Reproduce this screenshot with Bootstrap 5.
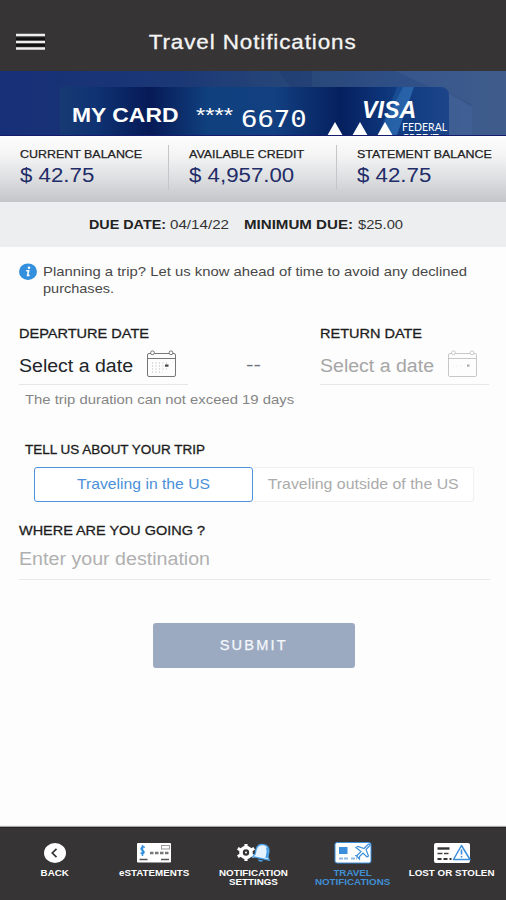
<!DOCTYPE html>
<html lang="en">
<head>
<meta charset="utf-8">
<meta name="viewport" content="width=device-width, initial-scale=1">
<title>Travel Notifications</title>
<link href="https://cdn.jsdelivr.net/npm/bootstrap@5.3.0/dist/css/bootstrap.min.css" rel="stylesheet">
<style>
body{font-family:"Liberation Sans",Arial,sans-serif;color:#333;overflow:hidden;background:#fdfdfd}
.screen{height:900px}
/* extended-width lettering */
.wx{display:inline-block;white-space:nowrap;transform-origin:0 50%;transform:scaleX(var(--k,1.08));flex:none}
.wc{transform-origin:50% 50%}
.top-bar{height:71px;background:#363435;padding:12px 16px 0 16px}
.menu-btn{width:29px}
.top-title{font-size:20px;letter-spacing:.8px;color:#f4f4f4;--k:1.122;-webkit-text-stroke:.3px #f4f4f4}
.title-wrap{padding-right:29px}
.hero{height:65px;background:linear-gradient(90deg,#172f77 0,#1b3876 35%,#284879 60%,#2f4f88 80%,#3b5888 100%);border-bottom:1px solid #141a6c}
.hero-art{inset:0}
.plate{margin:16px 57px 0 60px;height:48px;border-radius:0 8px 0 0;padding-left:12px;color:#fff;background:linear-gradient(90deg,#173a73 0,#0f3373 9%,#061a56 23%,#10407e 38%,#124081 55%,#06205f 72%,#0f3a80 86%,#1c458a 100%)}
.plate-name{width:124px;height:56px;font-size:21px;font-weight:700;--k:1.091}
.plate-stars{width:45px;padding-top:8px;font-size:20px;--k:1.188}
.plate-num{width:86px;height:48px;padding-top:17px;font-family:"DejaVu Sans Mono",monospace;font-size:23.5px;--k:1.16}
.plate-visa{right:9px;top:10px;width:78px}
.visa-word{font-size:23.5px;line-height:27px;height:27px;font-weight:700;font-style:italic;display:block;--k:.99}
.visa-sub{font-family:Lato,sans-serif;font-size:10.5px;line-height:11px;margin:-2px 0 0 40px;--k:1}
.visa-sub .wx{display:block}
.balances{height:66px;background:linear-gradient(#fdfdfe 0,#f4f4f5 30%,#dcdee0 65%,#c3c6c9 100%)}
.bal{padding:10px 0 0 20px;width:168.500px}
.bal + .bal::before{content:"";position:absolute;left:-1px;top:9px;height:45px;border-left:1px solid #c4c6c9}
.bal-label{display:block;font-size:11.5px;line-height:16px;color:#222;--k:1.082;-webkit-text-stroke:.25px #222}
.bal-value{display:block;font-size:20.5px;line-height:26px;color:#222c68;--k:1.086}
.due{height:45px;background:#edeef0;font-size:13px;padding-left:89px;color:#333}
.due b{color:#222}
.form-area{padding:16px 17px 0 19px}
.info-line{font-size:13.5px;line-height:17px;color:#484848;gap:6px}
.field-label{font-size:13.5px;line-height:18px;color:#1c1c1c;-webkit-text-stroke:.3px #1c1c1c}
.date-box{width:169px;border-bottom:1px solid #e6e6e6;height:42px;padding-top:5px}
.date-box svg{margin-top:1px}
.date-text{font-size:18px;line-height:36px;width:127px;--k:1.085}
.hint{font-size:13.5px;line-height:18px;color:#858585;padding:2px 0 0 6px}
.trip-label{font-size:12.5px;--k:1.078;padding-left:6px;margin-top:32px}
.seg{margin:8px 14px 0 15px;height:35px}
.seg .btn{padding:0;font-size:15px;border-radius:3px;height:35px;width:219px;background:#fff}
.seg .seg-on{border:1px solid #4f92dc;color:#4a90d9;z-index:1}
.seg .seg-off{border:1px solid #f0f0f0;border-left:0;color:#ababab;width:221px}
.dest{border:0;border-bottom:1px solid #e8e8e8;height:40px;width:471px}
.dest .wx{font-size:18px;line-height:39px;color:#b0b0b0;--k:1.091}
.submit{width:202px;height:45px;margin:43px auto 0 134px;background:#9caac1;border-radius:3px;border:0;color:#f4f7fb;font-size:14px;letter-spacing:2.1px;padding:0;-webkit-text-stroke:.25px #f4f7fb}
.submit:hover{background:#9caac1;color:#f4f7fb}
.tabs{height:73px;background:#363435;border-top:1px solid #222;box-shadow:0 -1px 1px #aaa;color:#fff;padding:0 3px 0 5px}
.tab-item{width:99.3px;padding-top:13px;font-size:9.5px;line-height:8.5px;font-weight:700;--k:1.03}
.tab-item svg{height:24px;margin-bottom:4px}
.tab-on{color:#408fd4}
</style>
<script src="https://cdn.jsdelivr.net/npm/bootstrap@5.3.0/dist/js/bootstrap.bundle.min.js"></script>
</head>
<body>
<div class="screen d-flex flex-column">
  <header class="top-bar d-flex align-items-center">
    <svg class="menu-btn" height="18" viewBox="0 0 28 18" preserveAspectRatio="none"><path d="M0 6h28M0 12h28" stroke="#111" stroke-width="3"/><path d="M0 2h28M0 9h28M0 15.500h28" stroke="#eee" stroke-width="2.300"/></svg>
    <div class="flex-grow-1 text-center title-wrap"><span class="wx wc top-title">Travel Notifications</span></div>
  </header>

  <section class="hero position-relative overflow-hidden flex-shrink-0">
    <svg class="hero-art position-absolute" width="506" height="65"><path d="M278 0H312V16H290z" fill="#1e3a70" opacity=".5"/><path d="M395 0 430 16 450 22 472 34V65H506V0z" fill="#476496" opacity=".35"/><path d="M449 22 472 36V65H449z" fill="#4a6a9f" opacity=".5"/></svg>
    <div class="plate d-flex position-relative">
      <svg class="hero-art position-absolute" width="389" height="48"><path d="M343 0H354L337 48H318z" fill="#3476bd" opacity=".65"/><path d="M337 0H343L326 48H318z" fill="#2160a6" opacity=".5"/><path d="M267 49 275 35 283 49zM292 49 300 35 308 49zM317 49 325 35 333 49z" fill="#fff"/></svg>
      <div class="plate-name d-flex align-items-center"><span class="wx">MY CARD</span></div>
      <div class="plate-stars d-flex align-items-center"><span class="wx">****</span></div>
      <div class="plate-num d-flex align-items-center"><span class="wx">6670</span></div>
      <div class="plate-visa position-absolute">
        <span class="wx visa-word">VISA</span>
        <div class="visa-sub"><span class="wx">FEDERAL</span><span class="wx">CREDIT</span></div>
      </div>
    </div>
  </section>

  <section class="balances d-flex flex-shrink-0">
    <div class="bal position-relative"><div class="wx bal-label">CURRENT BALANCE</div><div class="wx bal-value">$ 42.75</div></div>
    <div class="bal position-relative"><div class="wx bal-label">AVAILABLE CREDIT</div><div class="wx bal-value">$ 4,957.00</div></div>
    <div class="bal position-relative"><div class="wx bal-label">STATEMENT BALANCE</div><div class="wx bal-value">$ 42.75</div></div>
  </section>

  <section class="due d-flex align-items-center flex-shrink-0">
    <div style="width:81px"><b class="wx" style="--k:1.103">DUE DATE:</b></div>
    <div style="width:74px"><span class="wx" style="--k:1.166">04/14/22</span></div>
    <div style="width:114px"><b class="wx" style="--k:1.161">MINIMUM DUE:</b></div>
    <span class="wx" style="--k:1.132">$25.00</span>
  </section>

  <main class="form-area flex-grow-1">
    <div class="info-line d-flex">
      <svg width="18" height="18" viewBox="0 0 18 18"><ellipse cx="9" cy="8.700" rx="9" ry="8.300" fill="#3490dc"/><circle cx="10" cy="4.800" r="1.300" fill="#fff"/><path d="M7.200 7.700H9.600L8.600 12.500H10.600" stroke="#fff" stroke-width="1.600" fill="none"/></svg>
      <div><span class="wx" style="--k:1.099">Planning a trip? Let us know ahead of time to avoid any declined</span><br><span class="wx" style="--k:1.075">purchases.</span></div>
    </div>

    <div class="d-flex justify-content-between">
      <div class="pt-4 mt-1">
        <div class="field-label"><span class="wx" style="--k:1.076">DEPARTURE DATE</span></div>
        <div class="date-box d-flex text-dark">
          <div class="date-text"><span class="wx">Select a date</span></div>
          <svg width="32" height="30" viewBox="0 0 32 30"><g fill="none" stroke="#777"><rect x="1.500" y="4.500" width="28" height="23" rx="1.500"/><path d="M1.500 9.500H29.500"/><g fill="#fff"><circle cx="6.500" cy="3.800" r="1.900"/><circle cx="25" cy="3.800" r="1.900"/></g><path d="M6 14H23M6 17H19M6 20H23M6 23H17" stroke="#bbb" stroke-dasharray="1 2.500"/></g><path d="M19 15.500h3.500v2.200H19z" fill="#444"/></svg>
        </div>
      </div>
      <div class="pt-4 mt-1">
        <div class="field-label">&nbsp;</div>
        <div class="date-text text-secondary w-auto pt-1 pe-1"><span class="wx" style="--k:1.25">--</span></div>
      </div>
      <div class="pt-4 mt-1">
        <div class="field-label"><span class="wx" style="--k:1.074">RETURN DATE</span></div>
        <div class="date-box d-flex" style="color:#a6a6a6">
          <div class="date-text"><span class="wx">Select a date</span></div>
          <svg width="32" height="30" viewBox="0 0 32 30"><g fill="none" stroke="#c8c8c8"><rect x="1.500" y="4.500" width="28" height="23" rx="1.500"/><path d="M1.500 9.500H29.500"/><g fill="#fff"><circle cx="6.500" cy="3.800" r="1.900"/><circle cx="25" cy="3.800" r="1.900"/></g><path d="M6 17H16" stroke="#e6e6e6" stroke-dasharray="1 2.500"/></g><path d="M20 15.500h2.500v2.200H20z" fill="#aaa"/></svg>
        </div>
      </div>
    </div>
    <div class="hint mt-1"><span class="wx" style="--k:1.1">The trip duration can not exceed 19 days</span></div>

    <div class="field-label trip-label"><span class="wx">TELL US ABOUT YOUR TRIP</span></div>
    <div class="seg d-flex">
      <button class="btn seg-on position-relative"><span class="wx wc" style="--k:1.047">Traveling in the US</span></button>
      <button class="btn seg-off"><span class="wx wc" style="--k:1.059">Traveling outside of the US</span></button>
    </div>

    <div class="field-label mt-3 pt-1"><span class="wx" style="--k:1.07">WHERE ARE YOU GOING ?</span></div>
    <div class="dest"><span class="wx">Enter your destination</span></div>

    <button class="btn submit d-block"><span class="wx wc" style="--k:1.04">SUBMIT</span></button>
  </main>

  <nav class="tabs d-flex flex-shrink-0 text-center">
    <div class="tab-item"><svg width="24" viewBox="0 0 24 24"><ellipse cx="12" cy="12" rx="11" ry="10" fill="#fff"/><path d="M13.500 7.800 9.300 12 13.500 16.200" fill="none" stroke="#333" stroke-width="1.700"/></svg><br><span class="wx wc">BACK</span></div>
    <div class="tab-item"><svg width="36" viewBox="0 0 36 24"><rect x="1" y="2" width="34" height="19.500" rx="1" fill="#fff"/><path d="M8.800 6.500C6 4.500 3.700 8 6.200 9.200 9 10.500 8.500 13.500 4.500 12M6.500 4v11" fill="none" stroke="#3490dc" stroke-width="1.500"/><path d="M14 12h20" stroke="#777" stroke-width="2.500" stroke-dasharray="3.500 1.500"/><rect x="25.500" y="4.500" width="8" height="3.500" fill="none" stroke="#999"/><path d="M3.500 18.500h8M25 18.500h8" stroke="#555" stroke-width="1.400"/></svg><br><span class="wx wc">eSTATEMENTS</span></div>
    <div class="tab-item"><svg width="36" viewBox="0 0 36 24"><circle cx="11" cy="11.500" r="5" fill="none" stroke="#fff" stroke-width="3.600"/><path d="M11 3v3M11 17v3M2.800 7.300l3.200 1.800M2.800 15.700l3.200-1.800M19.200 7.300 16 9.100M19.200 15.700 16 13.900" stroke="#fff" stroke-width="3.200"/><circle cx="11" cy="11.500" r="1" fill="#fff"/><g transform="rotate(12 27 12)"><path d="M18.500 17.500 20.500 14.500V9.500C21 5 24 3.500 27 3.500S33 5 33.500 9.500V14.500L35.500 17.500z" fill="#e6f3ff" stroke="#4b9fe6" stroke-width="1.300"/><path d="M24 19h6q-3 4-6 0" fill="#4b9fe6"/><path d="M30.500 5.500C32 7 32.500 12 32.300 16" stroke="#4b9fe6" stroke-width="2" fill="none"/></g></svg><br><span class="wx wc">NOTIFICATION<br>SETTINGS</span></div>
    <div class="tab-item tab-on"><svg width="38" viewBox="0 0 38 24"><rect x="1" y="1.500" width="36" height="20.500" rx="2" fill="#fff" stroke="#3b8edb"/><rect x="5" y="6" width="8.500" height="7" fill="#3b8edb"/><path d="M5 17.500h9M17 17.500h6" stroke="#8db9e3" stroke-width="2" stroke-dasharray="4 1"/><path d="M23 14.500 27 10.500 22 6.500 24 5.500 30 7.500 34 3.500Q37 2 36 4.500L32 8.500 34.500 15 33 16 29 12 25.500 15.500 25.500 18 22 14.500z" fill="#fff" stroke="#3b8edb" stroke-width="1.200"/></svg><br><span class="wx wc">TRAVEL<br>NOTIFICATIONS</span></div>
    <div class="tab-item"><svg width="38" viewBox="0 0 38 24"><rect x="1" y="2" width="36" height="20" rx="2" fill="#fff"/><path d="M4.500 7.500h12" stroke="#333" stroke-width="2.400"/><path d="M4.500 12.500h11" stroke="#444" stroke-width="1.500" stroke-dasharray="5 1.500"/><path d="M4.500 18h14" stroke="#333" stroke-width="2" stroke-dasharray="4 2"/><path d="M28.500 4.500 37 18.500H20.500z" fill="#fff" stroke="#3b8edb" stroke-width="1.500" stroke-linejoin="round"/><path d="M28.500 8.500v5M28.500 15v1.500" stroke="#3b8edb" stroke-width="1.600"/></svg><br><span class="wx wc">LOST OR STOLEN</span></div>
  </nav>
</div>
</body>
</html>
